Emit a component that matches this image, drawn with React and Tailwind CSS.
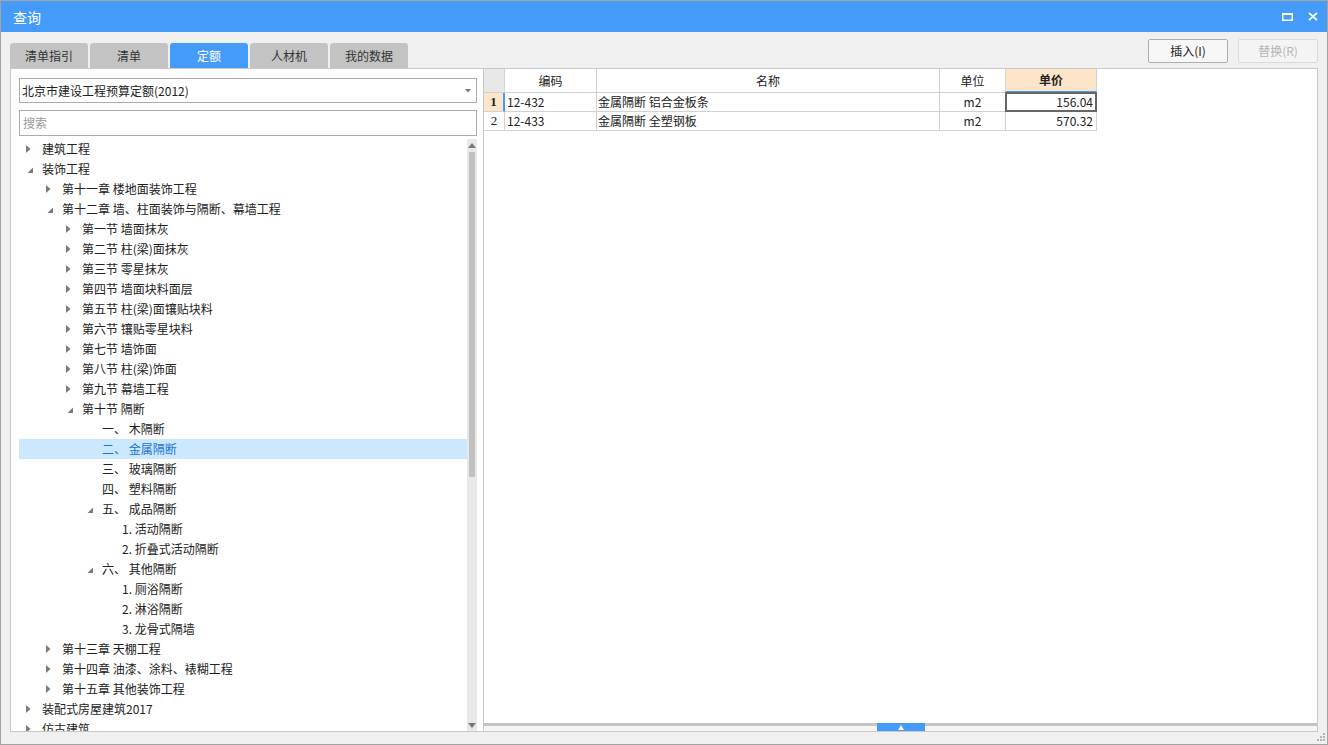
import React from 'react';

const tree = [
  [0, 'c', '建筑工程'],
  [0, 'e', '装饰工程'],
  [1, 'c', '第十一章 楼地面装饰工程'],
  [1, 'e', '第十二章 墙、柱面装饰与隔断、幕墙工程'],
  [2, 'c', '第一节 墙面抹灰'],
  [2, 'c', '第二节 柱(梁)面抹灰'],
  [2, 'c', '第三节 零星抹灰'],
  [2, 'c', '第四节 墙面块料面层'],
  [2, 'c', '第五节 柱(梁)面镶贴块料'],
  [2, 'c', '第六节 镶贴零星块料'],
  [2, 'c', '第七节 墙饰面'],
  [2, 'c', '第八节 柱(梁)饰面'],
  [2, 'c', '第九节 幕墙工程'],
  [2, 'e', '第十节 隔断'],
  [3, 'n', '一、 木隔断'],
  [3, 'n', '二、 金属隔断', true],
  [3, 'n', '三、 玻璃隔断'],
  [3, 'n', '四、 塑料隔断'],
  [3, 'e', '五、 成品隔断'],
  [4, 'n', '1. 活动隔断'],
  [4, 'n', '2. 折叠式活动隔断'],
  [3, 'e', '六、 其他隔断'],
  [4, 'n', '1. 厕浴隔断'],
  [4, 'n', '2. 淋浴隔断'],
  [4, 'n', '3. 龙骨式隔墙'],
  [1, 'c', '第十三章 天棚工程'],
  [1, 'c', '第十四章 油漆、涂料、裱糊工程'],
  [1, 'c', '第十五章 其他装饰工程'],
  [0, 'c', '装配式房屋建筑2017'],
  [0, 'c', '仿古建筑'],
];

const padByLevel = ['pl-[7px]', 'pl-[27px]', 'pl-[47px]', 'pl-[67px]', 'pl-[87px]'];

function Arrow({ kind }) {
  if (kind === 'c') {
    return (
      <svg width="5" height="8" viewBox="0 0 5 8">
        <polygon points="0,0 4.5,4 0,8" fill="#7b7b7b" />
      </svg>
    );
  }
  if (kind === 'e') {
    return (
      <svg width="7" height="7" viewBox="0 0 7 7" className="ml-[1px] mt-[3px]">
        <polygon points="6,0.5 6,6 0.5,6" fill="#7b7b7b" />
      </svg>
    );
  }
  return null;
}

function TreeRow({ level, kind, label, selected }) {
  return (
    <div
      className={`h-[20px] shrink-0 flex items-center whitespace-nowrap ${padByLevel[level]} ${
        selected ? 'bg-[#cce8ff] text-[#1a73d9]' : 'text-[#222]'
      }`}
    >
      <div className="w-[16px] h-[20px] flex items-center">
        <Arrow kind={kind} />
      </div>
      <span className="leading-none">{label}</span>
    </div>
  );
}

const cols = ['w-[21px]', 'w-[92px]', 'w-[343px]', 'w-[66px]', 'w-[91px]'];

export default function App() {
  return (
    <div className="relative w-[1328px] h-[745px] bg-[#f0f0f0] border border-[#a3a3a3] flex flex-col overflow-hidden font-['Noto_Sans_CJK_SC',sans-serif] text-[12px] text-[#222]">
      {/* title bar */}
      <div className="h-[31px] shrink-0 bg-[#459bf9] flex items-center justify-between pl-[12px] pr-[9px]">
        <span className="text-white text-[14px] leading-none">查询</span>
        <div className="flex items-center gap-[15px]">
          <svg width="11" height="8" viewBox="0 0 11 8">
            <rect x="0.75" y="1" width="9.5" height="6.25" fill="none" stroke="white" strokeWidth="1.5" />
            <rect x="0" y="0" width="11" height="2" fill="white" />
          </svg>
          <svg width="10" height="9" viewBox="0 0 10 9">
            <path d="M1 0.8 L9 8.2 M9 0.8 L1 8.2" stroke="white" strokeWidth="1.8" />
          </svg>
        </div>
      </div>

      {/* tabs + buttons */}
      <div className="h-[36px] shrink-0 flex items-end justify-between px-[9px]">
        <div className="flex gap-[2px]">
          {['清单指引', '清单', '定额', '人材机', '我的数据'].map((t) => (
            <div
              key={t}
              className={`w-[78px] h-[25px] rounded-t-[3px] flex items-center justify-center text-[12px] ${
                t === '定额' ? 'bg-[#459bf9] text-white' : 'bg-[#c3c3c3] text-[#333]'
              }`}
            >
              {t}
            </div>
          ))}
        </div>
        <div className="flex gap-[10px] mb-[5px]">
          <div className="w-[80px] h-[24px] rounded-[2px] border border-[#adadad] bg-[#f7f7f7] flex items-center justify-center text-[#222]">
            插入(I)
          </div>
          <div className="w-[80px] h-[24px] rounded-[2px] border border-[#dadada] bg-[#f4f4f4] flex items-center justify-center text-[#b4b4b4]">
            替换(R)
          </div>
        </div>
      </div>

      {/* main box */}
      <div className="h-[664px] shrink-0 mx-[9px] border border-[#c9c9c9] flex">
        {/* left panel */}
        <div className="w-[473px] shrink-0 bg-white border-r border-[#c9c9c9] flex flex-col pt-[9px] pl-[8px] pr-[6px]">
          <div className="h-[25px] shrink-0 border border-[#acacac] flex items-center justify-between pl-[2px] pr-[5px]">
            <span className="leading-none text-[#222]">北京市建设工程预算定额(2012)</span>
            <svg width="6" height="4" viewBox="0 0 6 4">
              <polygon points="0,0 6,0 3,3.5" fill="#7a7a7a" />
            </svg>
          </div>
          <div className="mt-[7px] h-[26px] shrink-0 border border-[#acacac] flex items-center pl-[3px]">
            <span className="leading-none text-[#9a9a9a]">搜索</span>
          </div>
          <div className="mt-[3px] flex-1 min-h-0 flex overflow-hidden">
            <div className="flex-1 min-w-0 flex flex-col overflow-hidden">
              {tree.map(([lv, k, label, sel], i) => (
                <TreeRow key={i} level={lv} kind={k} label={label} selected={sel} />
              ))}
            </div>
            {/* scrollbar */}
            <div className="w-[10px] shrink-0 bg-[#e8e8e8] flex flex-col">
              <div className="h-[12px] shrink-0 flex items-center justify-center">
                <svg width="8" height="5" viewBox="0 0 8 5">
                  <polygon points="4,0 8,5 0,5" fill="#77777d" />
                </svg>
              </div>
              <div className="flex-1 px-[2px] pt-[1px]">
                <div className="h-[325px] bg-[#c1c1c1]" />
              </div>
              <div className="h-[12px] shrink-0 flex items-center justify-center">
                <svg width="8" height="5" viewBox="0 0 8 5">
                  <polygon points="0,0 8,0 4,5" fill="#77777d" />
                </svg>
              </div>
            </div>
          </div>
        </div>

        {/* right panel */}
        <div className="flex-1 bg-white flex flex-col">
          <div className="flex flex-col">
            {/* header */}
            <div className="flex h-[24px]">
              <div className={`${cols[0]} bg-[#e8e8e8] border-r border-b border-[#d2d2d2]`} />
              <div className={`${cols[1]} border-r border-b border-[#d2d2d2] flex items-center justify-center`}>编码</div>
              <div className={`${cols[2]} border-r border-b border-[#d2d2d2] flex items-center justify-center`}>名称</div>
              <div className={`${cols[3]} border-r border-b border-[#d2d2d2] flex items-center justify-center`}>单位</div>
              <div className={`${cols[4]} bg-[#fde5c9] border-r border-[#d2d2d2] border-b-2 border-b-[#459bf9] flex items-center justify-center font-bold`}>
                单价
              </div>
            </div>
            {/* row 1 */}
            <div className="flex h-[19px]">
              <div className={`${cols[0]} bg-[#fde5c9] border-r-2 border-r-[#459bf9] border-b border-b-[#d2d2d2] flex items-center justify-center font-bold font-['Liberation_Serif',serif] text-[13px]`}>
                1
              </div>
              <div className={`${cols[1]} border-r border-b border-[#d2d2d2] flex items-center pl-[2px]`}>12-432</div>
              <div className={`${cols[2]} border-r border-b border-[#d2d2d2] flex items-center pl-[1px]`}>金属隔断 铝合金板条</div>
              <div className={`${cols[3]} border-r border-b border-[#d2d2d2] flex items-center justify-center`}>m2</div>
              <div className={`${cols[4]} relative border-r border-b border-[#d2d2d2] flex items-center justify-end pr-[3px]`}>
                156.04
                <div className="absolute -top-px left-[-1px] right-[-1px] bottom-[-1px] border-2 border-[#666]" />
              </div>
            </div>
            {/* row 2 */}
            <div className="flex h-[19px]">
              <div className={`${cols[0]} border-r border-b border-[#d2d2d2] flex items-center justify-center font-['Liberation_Serif',serif] text-[13px]`}>
                2
              </div>
              <div className={`${cols[1]} border-r border-b border-[#d2d2d2] flex items-center pl-[2px]`}>12-433</div>
              <div className={`${cols[2]} border-r border-b border-[#d2d2d2] flex items-center pl-[1px]`}>金属隔断 全塑钢板</div>
              <div className={`${cols[3]} border-r border-b border-[#d2d2d2] flex items-center justify-center`}>m2</div>
              <div className={`${cols[4]} border-r border-b border-[#d2d2d2] flex items-center justify-end pr-[3px]`}>570.32</div>
            </div>
          </div>
          <div className="flex-1" />
          {/* splitter */}
          <div className="relative h-[8px] shrink-0 flex flex-col">
            <div className="h-[3px] bg-[#c4c4c4]" />
            <div className="flex-1 bg-[#f5f5f5]" />
            <div className="absolute top-0 left-1/2 -translate-x-1/2 w-[48px] h-[8px] bg-[#459bf9] flex items-center justify-center">
              <svg width="6" height="5" viewBox="0 0 6 5">
                <polygon points="3,0 6,5 0,5" fill="white" />
              </svg>
            </div>
          </div>
        </div>
      </div>

      {/* resize grip */}
      <svg className="absolute right-[2px] bottom-[3px]" width="9" height="9" viewBox="0 0 9 9">
        <rect x="7" y="1" width="2" height="2" fill="#b3b3b3" />
        <rect x="4" y="4" width="2" height="2" fill="#b3b3b3" />
        <rect x="7" y="4" width="2" height="2" fill="#b3b3b3" />
        <rect x="1" y="7" width="2" height="2" fill="#b3b3b3" />
        <rect x="4" y="7" width="2" height="2" fill="#b3b3b3" />
        <rect x="7" y="7" width="2" height="2" fill="#b3b3b3" />
      </svg>
    </div>
  );
}
